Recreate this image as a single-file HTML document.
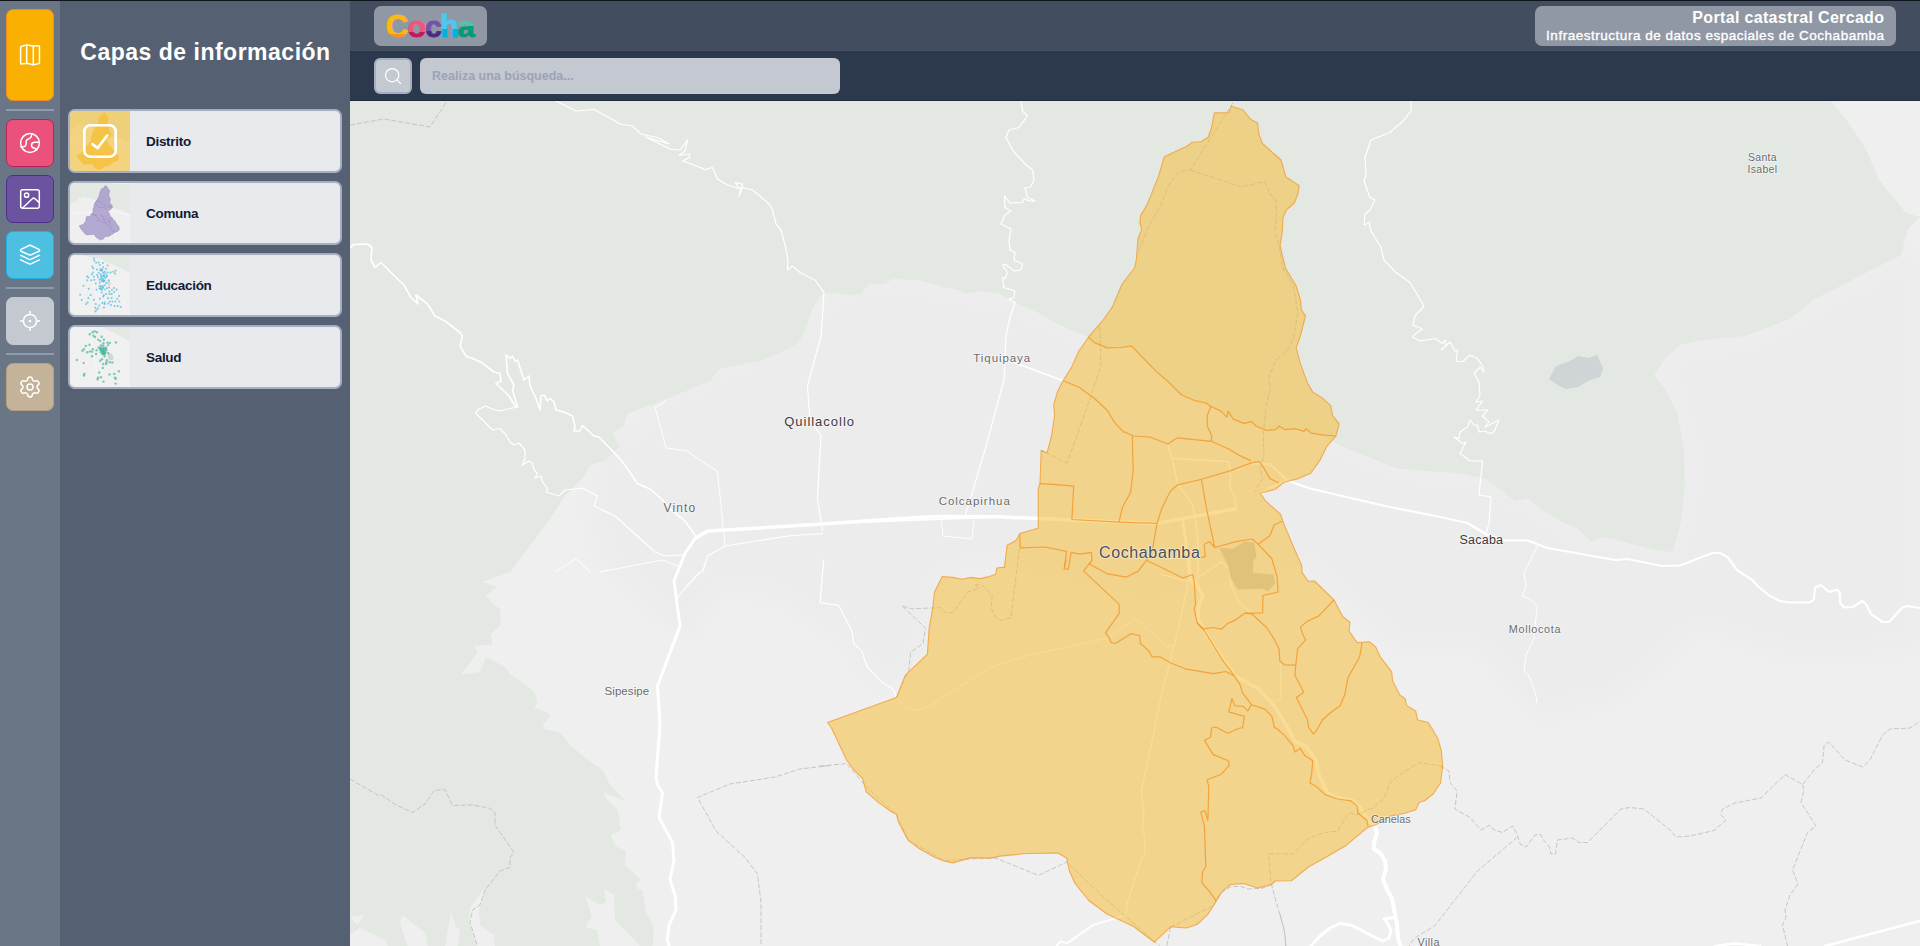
<!DOCTYPE html>
<html lang="es">
<head>
<meta charset="utf-8">
<title>Portal catastral Cercado</title>
<style>
*{box-sizing:border-box;margin:0;padding:0}
html,body{width:1920px;height:946px;overflow:hidden;background:#eeeeee;font-family:"Liberation Sans",sans-serif}
#app{position:relative;width:1920px;height:946px;overflow:hidden}
#topline{position:absolute;left:0;top:0;width:1920px;height:1px;background:#10151d;z-index:20}
/* left icon bar */
#bar{position:absolute;left:0;top:0;width:60px;height:946px;background:#6a7586}
.btn{position:absolute;left:6px;width:48px;height:48px;border-radius:7px;border:1px solid transparent;display:flex;align-items:center;justify-content:center}
.btn svg{display:block}
.sep{position:absolute;left:6px;width:48px;height:2px;background:#8e99aa}
#b1{top:9px;height:92px;background:#f9b000;border-color:#f08a1c}
#b2{top:119px;background:#ea527b;border-color:#bd1f56}
#b3{top:175px;background:#6b539f;border-color:#4c2f8a}
#b4{top:231px;background:#4dc0e1;border-color:#22aee0}
#b5{top:297px;background:#c4c8d0;border-color:#c4c8d0}
#b6{top:363px;background:#c4b299;border-color:#b59f80}
/* panel */
#panel{position:absolute;left:60px;top:0;width:290px;height:946px;background:#556172}
#panel h1{position:absolute;left:0;top:37px;width:290px;text-align:center;color:#fff;font-size:23px;line-height:30px;font-weight:bold;white-space:nowrap;letter-spacing:0.5px;padding-left:1px}
.card{position:absolute;left:8px;width:274px;height:64px;border:2px solid #a5afc0;border-radius:7px;background:#e8eaee;overflow:hidden}
.card .th{position:absolute;left:0;top:0;width:60px;height:60px;overflow:hidden}
.card .lb{position:absolute;left:76px;top:1px;line-height:60px;font-size:13.5px;letter-spacing:-0.3px;font-weight:bold;color:#111a33;white-space:nowrap}
/* top bars */
#top{position:absolute;left:350px;top:1px;width:1570px;height:50px;background:#424d5f;border-bottom:1px solid #465164}
#search{position:absolute;left:350px;top:51px;width:1570px;height:50px;background:#2c384b;border-bottom:1px solid #202c40}
#logo{position:absolute;left:24px;top:5px;width:113px;height:40px;border-radius:7px;background:#9198a5}
#ttl{position:absolute;left:1185px;top:5px;width:361px;height:40px;border-radius:7px;background:#9198a5;color:#fff;text-align:right;padding-right:12px;white-space:nowrap}
#ttl b{display:block;font-size:16px;line-height:18px;margin-top:3px;letter-spacing:0.33px;margin-right:-0.33px}
#ttl span{display:block;font-size:13.5px;line-height:18px;margin-top:0;letter-spacing:0.52px;margin-right:-0.52px;-webkit-text-stroke:0.35px #fff}
#sbtn{position:absolute;left:24px;top:7px;width:38px;height:36px;border-radius:6px;background:#c4c8d0;border:2px solid #a5afc0}
#sinp{position:absolute;left:70px;top:7px;width:420px;height:36px;border-radius:6px;background:#c4c8d0;color:#9ba3b4;font-size:12.5px;line-height:36px;padding-left:12px;font-weight:bold}
/* map */
#map{position:absolute;left:350px;top:101px;width:1570px;height:845px;background:#efefef;overflow:hidden}
#map svg{position:absolute;left:-350px;top:-101px}
</style>
</head>
<body>
<div id="app">
<div id="map">
<svg id="mapsvg" width="1920" height="946" viewBox="0 0 1920 946">
<rect x="350" y="100" width="1570" height="846" fill="#efefef"/>
<defs><filter id="ub" x="-10%" y="-10%" width="120%" height="120%"><feGaussianBlur stdDeviation="9"/></filter></defs>
<path d="M600.0 450.0 L662.0 395.0 L720.0 365.0 L802.0 330.0 L830.0 288.0 L892.0 275.0 L1015.0 298.0 L1088.0 333.0 L1340.0 440.0 L1397.0 464.0 L1485.0 474.0 L1540.0 504.0 L1591.0 538.0 L1674.0 547.0 L1685.0 486.0 L1684.0 448.0 L1665.0 388.0 L1654.0 376.0 L1680.0 345.0 L1745.0 336.0 L1813.0 300.0 L1901.0 255.0 L1920.0 250.0 L1920.0 650.0 L1800.0 660.0 L1700.0 630.0 L1620.0 700.0 L1540.0 720.0 L1480.0 650.0 L1400.0 650.0 L1340.0 600.0 L1301.0 565.0 L1150.0 600.0 L1004.0 567.0 L942.0 577.0 L930.0 627.0 L927.0 654.0 L905.0 675.0 L880.0 690.0 L840.0 640.0 L780.0 600.0 L720.0 590.0 L690.0 640.0 L640.0 600.0 L600.0 560.0 L585.0 500.0 Z" fill="#ececec" filter="url(#ub)"/>
<path d="M350.0 100.0 L1830.0 100.0 L1848.0 122.0 L1866.0 149.0 L1879.0 180.0 L1906.0 213.0 L1920.0 217.0 L1908.0 229.0 L1901.0 255.0 L1813.0 300.0 L1790.0 319.0 L1745.0 336.0 L1697.5 341.0 L1680.0 345.0 L1665.0 358.5 L1654.0 376.0 L1665.0 388.5 L1677.5 413.5 L1684.0 448.5 L1685.0 486.0 L1681.0 522.5 L1672.5 552.0 L1655.0 550.0 L1620.0 541.0 L1602.5 537.0 L1591.0 541.5 L1577.5 528.5 L1560.0 521.0 L1540.0 508.5 L1527.5 498.5 L1515.0 501.0 L1502.5 491.0 L1485.0 478.5 L1460.0 473.5 L1397.5 468.5 L1372.5 458.5 L1350.0 450.0 L1337.0 444.0 L1322.0 435.0 L1296.0 429.0 L1267.0 430.0 L1244.0 423.0 L1227.0 415.0 L1211.0 406.0 L1194.0 400.0 L1182.0 395.0 L1171.0 384.0 L1155.0 370.0 L1131.0 346.0 L1107.0 348.0 L1088.0 337.0 L1080.0 334.0 L1070.0 330.0 L1055.0 322.5 L1037.5 312.5 L1015.0 302.5 L1000.0 294.0 L980.0 291.0 L965.0 294.0 L957.5 290.0 L940.0 286.0 L917.5 280.0 L892.5 279.0 L885.0 284.0 L870.0 284.0 L860.0 294.0 L847.5 295.0 L830.0 292.5 L821.0 295.0 L812.0 310.0 L802.5 336.0 L795.0 346.0 L760.0 361.0 L720.0 368.5 L710.0 381.0 L662.5 401.0 L627.5 413.5 L624.0 426.0 L612.5 433.5 L620.0 446.0 L605.0 461.0 L590.0 465.0 L582.5 478.5 L565.0 496.0 L545.0 526.0 L510.0 572.0 L482.5 582.0 L497.5 587.0 L485.0 596.0 L500.0 609.5 L501.0 624.5 L491.0 634.5 L492.5 644.5 L474.0 646.0 L477.5 653.0 L461.0 674.5 L480.0 672.0 L486.0 657.0 L505.0 667.0 L510.0 674.5 L522.5 682.0 L535.0 693.0 L537.5 702.0 L534.0 708.0 L545.0 711.0 L551.0 716.0 L542.5 724.5 L545.0 729.5 L560.0 732.0 L570.0 745.0 L585.0 757.5 L602.5 770.0 L610.0 785.0 L626.0 801.0 L604.0 792.5 L605.0 797.5 L617.5 810.0 L621.0 830.0 L611.0 835.0 L615.0 846.0 L626.0 851.0 L625.0 865.0 L641.0 880.0 L636.0 882.5 L637.5 889.0 L642.5 890.0 L645.0 910.0 L654.0 927.5 L652.5 946.0 L350.0 946.0 Z" fill="#e3e8e3"/>
<path d="M1549.0 379.0 L1556.0 366.0 L1570.0 361.0 L1578.0 356.0 L1588.0 358.0 L1597.0 355.0 L1603.0 368.0 L1600.0 377.0 L1588.0 381.0 L1578.0 387.0 L1566.0 389.0 L1558.0 385.0 Z" fill="#cfd4d6"/>
<path d="M604.0 888.0 L614.0 895.0 L615.0 920.0 L640.0 946.0 L600.0 946.0 L597.0 930.0 L585.0 927.0 L592.0 917.0 L585.0 896.0 L600.0 905.0 L606.0 902.0 Z" fill="#efefef"/>
<path d="M485.0 887.5 L482.5 897.5 L479.0 910.0 L480.0 925.0 L494.0 935.0 L495.0 946.0 L477.5 946.0 L469.0 922.5 L470.0 907.5 Z" fill="#efefef"/>
<path d="M451.0 912.5 L456.0 927.5 L460.0 930.0 L458.0 946.0 L427.5 946.0 L425.0 932.5 L402.5 915.0 L400.0 922.5 L404.0 935.0 L407.5 946.0 L445.0 946.0 Z" fill="#efefef"/>
<path d="M365.0 915.0 L357.5 925.0 L350.0 917.5 L350.0 935.0 L360.0 927.5 L385.0 940.0 L387.5 946.0 L350.0 946.0 L350.0 917.0 Z" fill="#efefef"/>
<path d="M695.0 538.5 L707.5 531.0 L760.0 528.0 L830.0 523.5 L900.0 518.5 L940.0 516.5 L1000.0 516.8 L1038.0 518.6 L1157.0 523.4 L1236.0 508.8" fill="none" stroke="#ffffff" stroke-width="3.5" stroke-linejoin="round" stroke-linecap="round"/>
<path d="M1000.0 517.0 L830.0 523.5 L707.5 531.0" fill="none" stroke="#ffffff" stroke-width="1.5" stroke-linejoin="round" stroke-linecap="round"/>
<path d="M707.5 531.0 L695.0 538.5 L685.0 553.5 L677.5 572.0 L674.0 581.0 L680.0 626.0 L657.5 686.0 L660.0 724.5 L656.0 777.5 L657.5 785.0 L662.5 792.5 L659.0 817.5 L672.5 842.5 L674.0 860.0 L670.0 880.0 L675.0 895.0 L676.0 910.0 L669.0 925.0 L667.5 940.0 L669.0 946.0" fill="none" stroke="#ffffff" stroke-width="3.0" stroke-linejoin="round" stroke-linecap="round"/>
<path d="M822.5 533.5 L787.5 536.0 L725.0 546.0 L707.5 556.0 L702.5 572.0 L700.0 572.0 L685.0 588.0 L677.5 598.0" fill="none" stroke="#ffffff" stroke-width="1.2" stroke-linejoin="round" stroke-linecap="round"/>
<path d="M555.0 572.0 L576.0 558.5 L590.0 572.0" fill="none" stroke="#ffffff" stroke-width="1.0" stroke-linejoin="round" stroke-linecap="round"/>
<path d="M600.0 572.0 L662.5 560.0 L677.5 566.0" fill="none" stroke="#ffffff" stroke-width="1.0" stroke-linejoin="round" stroke-linecap="round"/>
<path d="M556.0 101.0 L576.0 111.0 L594.0 109.5 L609.0 117.5 L620.0 124.0 L632.5 126.0 L641.0 134.0 L657.5 137.5 L669.0 144.0 L646.0 137.0 L670.0 149.0 L680.0 150.0 L687.5 140.0 L685.0 151.0 L679.0 155.5 L689.0 154.0 L690.0 157.5 L682.5 161.0 L695.0 165.5 L705.0 169.5 L712.5 167.5 L717.5 179.0 L727.5 185.0 L740.0 189.0 L735.0 182.5 L742.5 184.0 L739.0 196.0 L742.5 187.5 L752.5 190.0 L760.0 196.0 L770.0 205.0 L772.5 210.0 L776.0 224.0 L781.0 230.0 L785.0 245.0 L788.0 260.0 L787.5 270.0 L792.5 266.0 L800.0 272.5 L815.0 280.0 L824.0 292.5 L821.0 336.0 L807.5 386.0 L810.0 421.0 L821.0 435.0 L817.5 498.5 L822.5 531.0" fill="none" stroke="#ffffff" stroke-width="1.2" stroke-linejoin="round" stroke-linecap="round"/>
<path d="M350.0 247.5 L354.0 244.5 L367.5 244.0 L372.0 247.5 L371.0 260.0 L375.0 267.5 L381.0 262.5 L396.0 277.5 L404.0 285.0 L411.0 297.5 L418.0 304.0 L416.0 295.0 L427.5 304.0 L435.0 316.0 L445.0 321.0 L460.0 332.5 L462.5 336.0 L460.0 346.0 L466.0 356.0 L481.0 362.0 L494.0 372.0 L500.0 373.5 L501.0 381.0 L496.0 383.5 L509.0 396.0 L515.0 406.0 L517.5 407.0 L512.5 390.0 L514.0 385.0 L507.5 373.5 L506.0 355.0 L510.0 358.5 L512.5 356.0 L515.0 361.0 L517.5 360.0 L524.0 380.0 L529.0 376.0 L530.0 386.0 L536.0 398.5 L540.0 410.0 L541.0 396.0 L544.0 395.0 L547.5 401.0 L550.0 398.5 L554.0 402.0 L556.0 410.0 L564.0 412.0 L572.5 416.0 L575.0 426.0 L574.0 431.0 L580.0 431.0 L582.5 425.5 L594.0 436.0 L599.0 437.0 L615.0 453.5 L625.0 465.0 L637.5 483.5 L650.0 489.0 L662.5 500.0 L672.5 511.0 L685.0 521.0 L695.0 535.0" fill="none" stroke="#ffffff" stroke-width="1.6" stroke-linejoin="round" stroke-linecap="round"/>
<path d="M517.5 407.0 L510.0 408.5 L500.0 411.0 L495.0 410.0 L485.0 406.0 L477.5 410.0 L476.0 413.5 L486.0 423.5 L492.5 430.0 L500.0 428.5 L506.0 435.0 L510.0 442.0 L514.0 445.0 L519.0 443.0 L525.0 450.0 L525.0 458.5 L522.5 465.0 L529.0 461.0 L532.5 463.5 L534.0 470.0 L537.5 473.5 L535.0 478.0 L541.0 476.0 L542.5 482.0 L547.5 488.5 L546.0 492.0 L559.0 496.0 L565.0 490.0 L582.5 488.0 L597.5 496.0 L594.0 506.0 L615.0 516.0 L655.0 552.0 L665.0 556.0 L682.5 555.0" fill="none" stroke="#ffffff" stroke-width="1.2" stroke-linejoin="round" stroke-linecap="round"/>
<path d="M665.0 400.0 L662.0 404.0 L655.0 407.0 L666.0 448.0 L687.5 451.0 L700.0 460.0 L717.5 471.0 L725.0 546.0" fill="none" stroke="#ffffff" stroke-width="1.0" stroke-linejoin="round" stroke-linecap="round"/>
<path d="M1021.0 101.0 L1022.5 111.0 L1027.5 116.0 L1019.0 127.5 L1009.0 130.0 L1006.0 137.5 L1012.5 150.0 L1025.0 164.0 L1032.5 170.0 L1034.0 180.0 L1030.0 187.5 L1025.0 187.5 L1027.5 197.5 L1035.0 201.0 L1030.0 201.0 L1024.0 199.0 L1022.5 202.5 L1010.0 203.0 L1004.5 196.0 L1005.0 207.5 L1011.0 211.0 L1005.0 215.0 L1001.0 224.0 L1011.0 229.0 L1009.0 240.0 L1010.0 250.0 L1015.0 252.5 L1014.0 260.0 L1022.5 264.0 L1021.0 270.0 L1014.0 271.0 L1005.0 264.0 L1002.5 265.0 L1007.5 272.5 L1005.0 279.0 L1002.5 277.5 L1004.0 287.5 L1015.0 291.0 L1014.0 297.5 L1009.0 299.0 L1015.0 302.5 L1010.0 317.5 L1006.0 336.0 L1004.0 380.0 L985.0 450.0 L970.0 500.0 L965.0 516.0" fill="none" stroke="#ffffff" stroke-width="1.2" stroke-linejoin="round" stroke-linecap="round"/>
<path d="M1000.0 358.0 L1013.0 362.0 L1064.0 381.0" fill="none" stroke="#ffffff" stroke-width="1.5" stroke-linejoin="round" stroke-linecap="round"/>
<path d="M941.0 516.0 L943.0 536.0 L972.0 539.0 L974.0 520.0" fill="none" stroke="#ffffff" stroke-width="1.0" stroke-linejoin="round" stroke-linecap="round"/>
<path d="M1411.0 101.0 L1411.0 111.0 L1404.0 120.0 L1390.0 132.5 L1371.0 140.0 L1365.0 157.5 L1366.0 175.0 L1364.0 181.0 L1370.0 197.5 L1375.0 200.0 L1370.0 210.0 L1365.0 214.0 L1364.0 225.0 L1369.0 222.5 L1371.0 231.0 L1381.0 247.5 L1384.0 260.0 L1396.0 272.5 L1410.0 282.5 L1417.5 295.0 L1424.0 306.0 L1415.0 316.0 L1413.0 325.0 L1422.5 329.0 L1414.0 335.0 L1412.5 337.0 L1420.0 341.0 L1435.0 338.5 L1442.5 343.5 L1445.0 340.0 L1446.0 346.0 L1441.0 350.0 L1450.0 342.0 L1455.0 351.0 L1457.5 350.0 L1456.0 361.0 L1462.5 362.0 L1470.0 355.0 L1477.5 358.5 L1482.5 366.0 L1484.0 372.0 L1480.0 367.0 L1474.0 373.5 L1479.0 382.0 L1480.0 396.0 L1476.0 402.0 L1482.5 401.0 L1476.0 410.0 L1487.5 410.0 L1482.5 416.0 L1489.0 422.0 L1485.0 427.0 L1499.0 420.0 L1494.0 432.0 L1490.0 433.5 L1485.0 431.0 L1479.0 432.0 L1477.5 425.0 L1474.0 425.0 L1470.0 420.0 L1467.5 427.0 L1460.0 432.0 L1459.0 438.5 L1454.0 437.0 L1462.5 443.5 L1466.0 442.0 L1460.0 453.5 L1465.0 457.0 L1470.0 461.0 L1482.5 461.0 L1481.0 476.0 L1479.0 495.0 L1491.0 497.0 L1489.0 523.5 L1486.0 533.5" fill="none" stroke="#ffffff" stroke-width="1.2" stroke-linejoin="round" stroke-linecap="round"/>
<path d="M1236.0 508.8 L1234.4 496.4 L1230.0 487.5 L1230.8 476.8 L1229.0 461.7 L1172.2 458.2" fill="none" stroke="#ffffff" stroke-width="1.5" stroke-linejoin="round" stroke-linecap="round"/>
<path d="M1167.8 444.9 L1172.2 458.2 L1177.6 484.0 L1191.8 503.5 L1195.3 517.7 L1198.0 542.5 L1198.0 578.0" fill="none" stroke="#ffffff" stroke-width="1.5" stroke-linejoin="round" stroke-linecap="round"/>
<path d="M1182.9 521.2 L1186.4 546.1 L1190.9 578.0 L1192.6 583.4" fill="none" stroke="#ffffff" stroke-width="3.0" stroke-linejoin="round" stroke-linecap="round"/>
<path d="M1236.0 470.0 L1252.0 462.6 L1269.9 464.4 L1287.6 480.4 L1301.8 485.7 L1310.0 488.5 L1385.0 506.0 L1440.0 517.0 L1467.5 523.0 L1487.5 535.0 L1505.0 540.5 L1527.5 540.5 L1547.5 548.0 L1615.0 560.0 L1627.5 559.0 L1662.5 566.0 L1680.0 565.5 L1712.5 553.0 L1720.0 553.0 L1727.5 557.0 L1737.5 570.5 L1752.5 580.0 L1757.5 586.0 L1770.0 596.0 L1780.0 601.0 L1790.0 602.5 L1810.0 602.5 L1814.0 599.0 L1815.0 587.5 L1821.0 585.0 L1829.0 592.0 L1837.5 589.5 L1840.0 594.0 L1840.0 602.5 L1844.0 607.5 L1852.5 607.0 L1862.5 601.0 L1866.0 604.0 L1871.0 614.0 L1882.5 622.0 L1889.0 622.0 L1902.5 607.5 L1907.5 606.0 L1920.0 608.0" fill="none" stroke="#ffffff" stroke-width="2.2" stroke-linejoin="round" stroke-linecap="round"/>
<path d="M1287.6 480.4 L1270.0 488.0 L1262.0 493.0" fill="none" stroke="#ffffff" stroke-width="2.2" stroke-linejoin="round" stroke-linecap="round"/>
<path d="M1537.5 546.0 L1524.0 572.5 L1526.0 586.0 L1522.5 596.0 L1530.0 599.0 L1537.5 606.0 L1536.0 617.5 L1534.0 639.0 L1526.0 655.0 L1524.0 671.0 L1529.0 676.0 L1536.0 696.0 L1537.0 703.0" fill="none" stroke="#ffffff" stroke-width="1.0" stroke-linejoin="round" stroke-linecap="round"/>
<path d="M1188.4 560.0 L1190.2 579.5 L1196.4 583.0 L1202.6 595.5 L1198.2 607.9 L1198.2 620.4 L1206.2 634.6 L1234.6 675.4 L1259.4 689.6 L1275.4 707.4 L1287.8 728.0 L1294.9 741.3 L1305.6 745.8 L1316.3 760.0 L1318.0 772.4 L1326.9 791.9 L1335.8 797.2 L1351.8 799.9 L1360.6 807.9 L1369.5 822.1 L1374.9 825.7" fill="none" stroke="#ffffff" stroke-width="3.5" stroke-linejoin="round" stroke-linecap="round"/>
<path d="M1374.9 825.7 L1377.0 833.0 L1374.0 843.0 L1374.0 849.0 L1380.0 853.0 L1385.0 860.5 L1386.0 868.0 L1383.0 879.0 L1387.5 890.5 L1392.0 898.0 L1394.0 909.0 L1397.0 924.0 L1398.0 938.0 L1400.5 946.0" fill="none" stroke="#ffffff" stroke-width="4.0" stroke-linejoin="round" stroke-linecap="round"/>
<path d="M1394.0 917.5 L1384.0 919.0 L1387.5 923.0 L1391.0 930.5 L1389.0 938.0 L1382.5 941.0 L1374.0 937.0 L1352.5 925.5 L1340.0 923.5 L1330.0 928.0 L1319.0 937.0 L1311.0 946.0" fill="none" stroke="#ffffff" stroke-width="3.0" stroke-linejoin="round" stroke-linecap="round"/>
<path d="M1920.0 921.0 L1825.0 946.0" fill="none" stroke="#ffffff" stroke-width="2.5" stroke-linejoin="round" stroke-linecap="round"/>
<path d="M1715.0 946.0 L1735.0 943.5 L1760.0 946.0" fill="none" stroke="#ffffff" stroke-width="2.5" stroke-linejoin="round" stroke-linecap="round"/>
<path d="M1160.0 574.2 L1186.6 581.3 L1197.3 578.6 L1221.3 561.8 L1229.2 568.9 L1231.0 584.9 L1238.1 600.8 L1252.3 614.2" fill="none" stroke="#ffffff" stroke-width="1.3" stroke-linejoin="round" stroke-linecap="round"/>
<path d="M1188.4 583.0 L1177.8 631.0 L1160.0 700.3 L1154.7 728.0 L1141.4 791.9 L1144.0 815.0 L1142.3 829.2 L1144.9 836.3 L1144.9 852.3 L1139.6 864.7 L1127.0 904.0 L1127.0 909.4 L1124.3 915.6" fill="none" stroke="#ffffff" stroke-width="1.2" stroke-linejoin="round" stroke-linecap="round"/>
<path d="M1124.3 915.6 L1106.5 920.9 L1092.3 925.4 L1079.9 934.3 L1067.5 943.1 L1060.4 941.4 L1056.8 946.0" fill="none" stroke="#ffffff" stroke-width="2.0" stroke-linejoin="round" stroke-linecap="round"/>
<path d="M896.4 697.6 L905.2 706.5 L916.8 710.9 L930.1 705.6 L990.5 667.4 L1029.5 655.0 L1107.6 638.1 L1135.2 618.6 L1160.0 639.9 L1166.2 646.1 L1174.2 645.8" fill="none" stroke="#ffffff" stroke-width="1.0" stroke-linejoin="round" stroke-linecap="round"/>
<path d="M1280.7 663.0 L1280.7 698.5 L1271.9 701.2" fill="none" stroke="#ffffff" stroke-width="1.0" stroke-linejoin="round" stroke-linecap="round"/>
<path d="M823.6 560.0 L820.0 602.6 L838.6 605.3 L852.0 631.0 L853.7 643.5 L861.7 650.6 L867.0 666.5 L882.1 682.5 L892.8 688.7 L896.4 696.7" fill="none" stroke="#ffffff" stroke-width="1.2" stroke-linejoin="round" stroke-linecap="round"/>
<path d="M1233.0 102.7 L1190.4 170.1 L1178.9 171.9 L1167.4 187.0 L1162.0 203.0 L1147.8 227.8 L1138.0 252.7" fill="none" stroke="#bfc1c2" stroke-width="0.9" stroke-dasharray="5 2" stroke-linejoin="round"/>
<path d="M1190.4 170.1 L1242.0 187.0 L1265.0 181.3 L1268.6 191.4 L1275.7 201.2 L1276.6 215.4 L1274.8 233.2 L1279.2 245.6 L1282.8 268.0 L1293.4 285.8 L1297.9 312.4 L1293.4 339.0 L1286.3 351.5 L1275.7 360.3 L1268.6 378.1 L1270.4 388.7 L1265.9 406.5 L1263.3 436.0 L1264.0 455.0 L1260.0 470.0 L1262.8 478.0 L1255.0 492.0" fill="none" stroke="#bfc1c2" stroke-width="0.9" stroke-dasharray="5 2" stroke-linejoin="round"/>
<path d="M1099.9 326.6 L1100.8 365.7 L1091.0 395.8 L1076.8 436.0 L1067.0 463.0 L1041.2 450.2" fill="none" stroke="#bfc1c2" stroke-width="0.9" stroke-dasharray="5 2" stroke-linejoin="round"/>
<path d="M902.6 606.2 L912.3 608.8 L940.7 607.6 L946.1 613.3 L953.2 612.4 L967.4 592.0 L979.8 588.4 L974.5 584.9 L979.8 584.0 L986.0 588.4 L992.2 595.5 L991.3 607.9 L994.9 616.8 L1001.1 620.4 L1010.9 617.7 L1018.0 560.0 L1020.0 545.0" fill="none" stroke="#bfc1c2" stroke-width="0.9" stroke-dasharray="5 2" stroke-linejoin="round"/>
<path d="M902.6 606.2 L925.6 628.4 L923.0 643.5 L910.6 652.3 L908.8 670.1 L896.4 697.6" fill="none" stroke="#bfc1c2" stroke-width="0.9" stroke-dasharray="5 2" stroke-linejoin="round"/>
<path d="M1442.7 766.2 L1419.2 762.6 L1405.0 771.5 L1390.8 781.3 L1383.7 799.0 L1373.1 807.9 L1360.6 813.2 L1355.3 815.0 L1349.1 812.3 L1337.6 831.0 L1323.4 832.8 L1307.4 839.0 L1293.2 854.1 L1268.7 853.7 L1271.0 882.5 L1274.5 896.0 L1284.1 928.9 L1285.9 946.0" fill="none" stroke="#bfc1c2" stroke-width="0.9" stroke-dasharray="5 2" stroke-linejoin="round"/>
<path d="M1440.0 766.0 L1449.0 771.0 L1450.0 782.5 L1457.0 791.0 L1455.0 809.0 L1470.0 817.5 L1481.0 830.0 L1490.0 825.0 L1494.0 830.0 L1502.5 832.5 L1512.5 826.0 L1517.5 835.0 L1520.0 844.0 L1526.0 847.0 L1535.0 835.0 L1541.0 834.5 L1542.5 839.0 L1549.0 846.0 L1551.0 854.0 L1555.5 854.0 L1557.5 840.0 L1572.5 838.0 L1579.0 842.5 L1587.5 842.5 L1621.0 809.0 L1630.0 807.5 L1644.0 809.0 L1670.0 830.0 L1676.0 837.0 L1690.0 836.0 L1714.0 830.5 L1726.0 820.0 L1721.0 815.0 L1722.5 809.0 L1735.0 803.0 L1761.0 798.0 L1785.0 774.5 L1802.5 784.5 L1815.0 769.0 L1822.5 762.5 L1824.0 746.0 L1829.0 742.0 L1845.0 760.0 L1862.5 767.0 L1870.0 760.0 L1882.5 735.0 L1890.0 729.0 L1910.0 728.0 L1920.0 721.0" fill="none" stroke="#bfc1c2" stroke-width="0.9" stroke-dasharray="5 2" stroke-linejoin="round"/>
<path d="M1802.5 784.5 L1804.0 790.0 L1801.0 802.5 L1816.0 826.0 L1807.5 832.5 L1792.5 870.0 L1798.0 884.0 L1790.0 895.0 L1785.0 910.0 L1786.0 917.5 L1782.5 925.0 L1787.5 946.0" fill="none" stroke="#bfc1c2" stroke-width="0.9" stroke-dasharray="5 2" stroke-linejoin="round"/>
<path d="M1517.5 837.0 L1477.5 871.0 L1440.0 919.0 L1435.0 925.5 L1414.0 938.5 L1409.0 946.0" fill="none" stroke="#bfc1c2" stroke-width="0.9" stroke-dasharray="5 2" stroke-linejoin="round"/>
<path d="M820.0 766.2 L846.6 763.5 L864.4 784.8 L896.4 815.0 L908.8 840.7 L944.3 860.8 L969.1 859.0 L995.8 858.1 L1038.4 875.4 L1066.8 862.1 L1102.3 896.0 L1156.3 943.1 L1160.0 946.0" fill="none" stroke="#bfc1c2" stroke-width="0.9" stroke-dasharray="5 2" stroke-linejoin="round"/>
<path d="M350.0 779.0 L377.5 795.0 L381.0 794.5 L395.0 804.5 L412.5 812.5 L425.0 804.0 L434.0 790.5 L445.0 789.5 L452.5 805.5 L472.5 805.0 L489.0 808.0 L495.0 812.5 L495.0 825.0 L514.0 852.5 L510.0 857.5 L510.0 867.5 L500.0 871.0 L485.0 890.0 L480.0 905.0 L472.5 910.0 L470.0 922.5 L477.5 946.0" fill="none" stroke="#bfc1c2" stroke-width="0.9" stroke-dasharray="5 2" stroke-linejoin="round"/>
<path d="M1170.5 927.1 L1213.1 905.8 L1220.2 893.4 L1230.8 886.7 L1239.7 886.3 L1248.6 889.0 L1262.8 888.1 L1271.7 884.5" fill="none" stroke="#bfc1c2" stroke-width="0.9" stroke-dasharray="5 2" stroke-linejoin="round"/>
<path d="M1170.5 927.1 L1166.9 946.0" fill="none" stroke="#bfc1c2" stroke-width="0.9" stroke-dasharray="5 2" stroke-linejoin="round"/>
<path d="M830.0 765.5 L800.0 769.0 L775.0 777.0 L730.0 784.0 L697.5 797.5 L716.0 831.0 L745.0 857.5 L757.5 874.0 L761.0 902.5 L761.0 946.0" fill="none" stroke="#bfc1c2" stroke-width="0.9" stroke-dasharray="5 2" stroke-linejoin="round"/>
<path d="M820.0 766.2 L830.0 765.5" fill="none" stroke="#bfc1c2" stroke-width="0.9" stroke-dasharray="5 2" stroke-linejoin="round"/>
<path d="M350.0 125.0 L384.0 119.0 L430.0 127.0 L446.0 102.5" fill="none" stroke="#bfc1c2" stroke-width="0.9" stroke-dasharray="5 2" stroke-linejoin="round"/>
<path d="M1280.0 914.0 L1285.0 934.0 L1285.6 946.0" fill="none" stroke="#bfc1c2" stroke-width="0.9" stroke-dasharray="5 2" stroke-linejoin="round"/>
<path d="M1219.3 547.9 L1232.6 548.7 L1245.0 541.6 L1253.9 542.5 L1256.6 556.7 L1253.0 562.1 L1253.0 572.7 L1273.4 574.5 L1275.2 583.4 L1268.1 591.4 L1262.8 588.7 L1237.9 589.6 L1230.8 578.0 L1227.3 563.8 Z" fill="#cbcbc9"/>
<path d="M1231.3 106.2 L1242.8 109.8 L1250.8 119.5 L1257.6 123.1 L1258.8 133.7 L1262.4 143.5 L1281.0 160.0 L1285.8 176.7 L1299.1 185.6 L1297.9 194.1 L1294.3 203.0 L1286.3 210.1 L1282.8 218.1 L1282.4 231.4 L1280.1 245.6 L1285.4 268.0 L1296.1 285.8 L1300.5 300.0 L1301.4 309.7 L1305.5 315.9 L1300.5 335.5 L1296.1 347.9 L1300.5 363.9 L1307.6 383.4 L1313.0 392.3 L1321.8 397.6 L1330.7 405.6 L1332.5 415.4 L1339.2 423.9 L1336.0 436.0 L1326.7 446.7 L1319.6 460.9 L1310.7 473.3 L1298.3 478.6 L1284.1 482.2 L1275.2 489.3 L1260.1 493.2 L1266.3 501.7 L1280.5 514.1 L1284.1 524.8 L1294.7 549.6 L1301.8 565.6 L1302.0 572.4 L1308.3 581.3 L1314.5 581.0 L1334.0 600.0 L1342.9 616.8 L1350.0 622.1 L1349.1 631.0 L1357.1 642.6 L1369.5 641.7 L1375.7 647.0 L1380.2 656.8 L1391.7 671.9 L1392.6 680.7 L1399.7 694.9 L1405.0 698.5 L1406.8 705.6 L1415.7 710.9 L1417.5 719.8 L1428.1 722.5 L1431.7 728.0 L1437.9 738.7 L1441.4 751.1 L1442.7 766.2 L1440.5 783.0 L1433.4 793.7 L1424.6 800.8 L1419.2 802.6 L1415.7 809.7 L1405.0 813.2 L1390.8 815.9 L1375.7 824.8 L1367.7 827.4 L1346.4 845.2 L1326.9 856.7 L1308.9 866.8 L1291.4 880.7 L1275.2 881.0 L1271.7 884.5 L1257.5 888.1 L1243.3 883.6 L1230.8 884.5 L1221.9 891.6 L1216.6 900.5 L1207.7 914.7 L1197.1 924.5 L1186.4 928.0 L1170.5 926.8 L1154.5 942.2 L1133.2 926.3 L1106.5 913.8 L1088.8 900.5 L1074.6 882.8 L1069.2 870.3 L1066.6 857.9 L1057.7 853.1 L1026.6 853.5 L1000.0 856.1 L990.5 858.1 L970.9 857.6 L953.2 862.9 L944.3 861.2 L933.6 856.7 L919.4 848.7 L907.9 839.9 L898.1 821.2 L896.7 814.5 L891.0 811.5 L878.6 802.6 L866.2 791.9 L862.6 778.6 L853.7 769.7 L846.6 760.0 L831.5 728.0 L827.5 722.5 L896.4 697.6 L905.2 675.4 L927.4 654.1 L929.2 627.5 L932.8 607.9 L934.5 592.0 L942.2 576.5 L953.2 577.4 L962.0 579.2 L970.9 577.4 L979.8 578.6 L987.8 576.9 L995.8 574.2 L996.7 568.0 L1004.7 567.1 L1004.4 567.4 L1007.1 545.2 L1015.6 540.8 L1020.4 533.3 L1038.2 528.3 L1038.2 489.3 L1040.0 483.0 L1041.2 450.2 L1047.0 452.9 L1051.5 436.0 L1054.6 415.4 L1053.7 404.7 L1057.3 392.3 L1063.1 380.7 L1071.5 367.4 L1078.6 351.5 L1088.4 337.2 L1103.5 319.5 L1112.3 307.1 L1122.1 284.0 L1134.5 268.0 L1136.3 259.8 L1138.1 238.5 L1141.6 229.6 L1139.9 222.5 L1140.7 215.4 L1147.0 204.8 L1151.4 194.1 L1158.5 176.4 L1164.2 156.8 L1186.9 146.2 L1192.2 142.3 L1201.1 141.7 L1208.2 137.3 L1211.8 126.6 L1214.4 112.8 L1228.6 112.8 Z" fill="#f5b92b" fill-opacity="0.5" stroke="none"/>
<path d="M1088.4 337.2 L1094.6 342.6 L1107.0 347.9 L1121.2 347.5 L1131.5 345.8 L1154.9 370.1 L1170.9 384.3 L1181.6 395.0 L1194.0 400.3 L1206.4 403.0 L1210.9 406.5 L1220.6 410.9 L1226.9 417.1 L1228.1 411.0 L1233.0 418.9 L1243.7 423.4 L1251.7 421.6 L1256.1 426.0 L1266.8 430.5 L1275.7 429.6 L1279.2 426.0 L1284.6 429.6 L1295.2 428.7 L1304.1 431.4 L1305.9 428.7 L1311.2 433.1 L1321.8 434.9 L1336.0 436.0" fill="none" stroke="#f39a2c" stroke-opacity="0.85" stroke-width="1.2" stroke-linejoin="round"/>
<path d="M1063.1 380.7 L1078.6 387.0 L1094.6 398.5 L1107.0 410.0 L1115.9 424.2 L1123.0 431.4 L1133.6 436.0 L1150.0 437.0 L1167.8 444.0 L1177.6 437.8 L1211.3 441.3 L1229.0 449.3 L1237.9 454.6 L1251.2 460.9" fill="none" stroke="#f39a2c" stroke-opacity="0.85" stroke-width="1.2" stroke-linejoin="round"/>
<path d="M1210.9 406.5 L1207.3 415.4 L1207.3 426.0 L1211.8 436.0 L1211.3 441.3" fill="none" stroke="#f39a2c" stroke-opacity="0.85" stroke-width="1.2" stroke-linejoin="round"/>
<path d="M1040.0 483.6 L1053.3 484.3 L1073.7 486.1 L1071.9 519.5 L1119.0 522.1 L1157.1 523.4" fill="none" stroke="#f39a2c" stroke-opacity="0.85" stroke-width="1.2" stroke-linejoin="round"/>
<path d="M1132.3 436.0 L1133.2 471.5 L1130.5 492.8 L1122.5 507.0 L1119.0 522.1" fill="none" stroke="#f39a2c" stroke-opacity="0.85" stroke-width="1.2" stroke-linejoin="round"/>
<path d="M1157.1 523.4 L1161.6 508.8 L1170.5 491.0 L1177.6 484.8 L1200.6 479.5 L1230.8 470.6 L1252.1 462.6 L1259.2 461.7 L1262.8 466.2 L1269.9 478.6 L1278.8 483.0" fill="none" stroke="#f39a2c" stroke-opacity="0.85" stroke-width="1.2" stroke-linejoin="round"/>
<path d="M1157.1 523.4 L1153.6 542.5 L1152.7 549.6 L1146.5 560.3 L1138.5 570.9 L1126.1 577.2 L1106.5 573.6 L1092.3 565.6 L1088.8 563.0" fill="none" stroke="#f39a2c" stroke-opacity="0.85" stroke-width="1.2" stroke-linejoin="round"/>
<path d="M1201.5 479.5 L1206.9 510.6 L1214.8 547.5 L1236.1 541.6 L1252.1 539.0 L1258.3 544.3 L1271.7 558.5 L1277.0 576.3 L1278.1 592.0 L1263.0 595.5 L1262.6 612.9 L1245.2 613.3" fill="none" stroke="#f39a2c" stroke-opacity="0.85" stroke-width="1.2" stroke-linejoin="round"/>
<path d="M1258.3 544.3 L1262.8 540.8 L1269.9 535.4 L1274.3 524.8 L1282.3 521.2" fill="none" stroke="#f39a2c" stroke-opacity="0.85" stroke-width="1.2" stroke-linejoin="round"/>
<path d="M1214.8 547.5 L1209.5 541.6 L1204.2 544.3 L1205.1 556.7 L1200.6 557.6" fill="none" stroke="#f39a2c" stroke-opacity="0.85" stroke-width="1.2" stroke-linejoin="round"/>
<path d="M1146.5 560.3 L1165.1 569.2 L1182.9 578.0 L1192.6 574.5 L1194.4 583.4 L1195.5 604.4 L1194.1 608.8 L1197.3 623.0 L1203.5 628.9 L1213.3 627.5 L1221.3 629.2 L1227.5 623.6 L1234.6 620.4 L1245.2 612.9 L1252.3 614.2 L1266.5 627.5 L1273.6 638.1 L1279.0 648.8 L1279.9 661.2 L1284.3 664.8 L1295.8 665.1" fill="none" stroke="#f39a2c" stroke-opacity="0.85" stroke-width="1.2" stroke-linejoin="round"/>
<path d="M1019.5 533.3 L1020.4 547.9 L1044.4 547.0 L1066.6 551.4 L1064.3 568.8 L1068.4 569.5 L1071.0 552.3 L1079.9 554.1 L1091.4 552.3 L1092.0 560.3 L1083.5 570.9 L1119.2 604.4 L1119.2 613.3 L1105.5 632.8 L1109.4 638.1 L1111.2 642.6 L1115.6 643.5 L1130.7 633.7 L1139.6 635.5 L1140.5 643.5 L1148.5 650.6 L1152.0 656.8 L1160.0 656.8 L1170.7 663.0 L1186.6 669.2 L1213.3 673.6 L1225.7 671.5 L1234.6 676.3" fill="none" stroke="#f39a2c" stroke-opacity="0.85" stroke-width="1.2" stroke-linejoin="round"/>
<path d="M1334.0 600.0 L1318.9 615.9 L1307.4 621.3 L1300.3 627.1 L1302.9 634.6 L1305.6 639.9 L1297.6 648.8 L1295.8 664.8 L1294.9 675.4 L1303.8 692.3 L1296.4 697.6 L1307.4 719.8 L1308.8 728.0 L1313.6 734.2" fill="none" stroke="#f39a2c" stroke-opacity="0.85" stroke-width="1.2" stroke-linejoin="round"/>
<path d="M1362.1 642.6 L1359.7 656.8 L1348.2 677.2 L1344.7 694.9 L1340.2 705.6 L1330.5 712.7 L1322.5 719.8 L1318.0 728.0 L1313.6 734.2" fill="none" stroke="#f39a2c" stroke-opacity="0.85" stroke-width="1.2" stroke-linejoin="round"/>
<path d="M1197.3 623.0 L1204.4 631.0 L1222.1 659.4 L1234.6 676.3 L1239.9 684.3 L1242.6 693.2 L1251.4 704.7 L1264.8 709.1 L1271.9 716.3 L1274.5 728.0 L1276.3 728.0 L1284.3 735.1 L1293.2 745.8 L1294.9 752.0 L1300.3 748.4 L1304.7 755.5 L1312.7 760.8 L1311.8 772.4 L1310.0 783.0 L1316.3 786.6 L1325.1 794.6 L1337.6 799.0 L1350.9 800.8 L1357.1 806.1 L1358.0 813.2 L1366.9 820.3 L1368.1 826.5" fill="none" stroke="#f39a2c" stroke-opacity="0.85" stroke-width="1.2" stroke-linejoin="round"/>
<path d="M1231.9 698.5 L1228.9 711.8 L1244.3 716.3 L1242.6 728.0 L1239.9 728.0 L1227.5 733.3 L1216.0 727.0 L1211.5 728.0 L1210.6 736.9 L1204.4 740.4 L1213.3 754.6 L1228.4 760.8 L1229.2 765.3 L1221.3 774.2 L1207.1 779.8 L1208.8 786.6 L1207.9 820.3 L1204.7 810.6 L1200.8 812.3 L1204.4 825.7 L1205.8 866.5 L1202.6 871.8 L1201.7 882.5 L1209.5 891.6 L1216.3 900.9" fill="none" stroke="#f39a2c" stroke-opacity="0.85" stroke-width="1.2" stroke-linejoin="round"/>
<path d="M1231.9 698.5 L1234.6 705.6 L1243.5 706.5 L1247.9 710.9 L1251.4 704.7" fill="none" stroke="#f39a2c" stroke-opacity="0.85" stroke-width="1.2" stroke-linejoin="round"/>
<path d="M1066.0 560.0 L1064.1 568.9" fill="none" stroke="#f39a2c" stroke-opacity="0.85" stroke-width="1.2" stroke-linejoin="round"/>
<path d="M1231.3 106.2 L1242.8 109.8 L1250.8 119.5 L1257.6 123.1 L1258.8 133.7 L1262.4 143.5 L1281.0 160.0 L1285.8 176.7 L1299.1 185.6 L1297.9 194.1 L1294.3 203.0 L1286.3 210.1 L1282.8 218.1 L1282.4 231.4 L1280.1 245.6 L1285.4 268.0 L1296.1 285.8 L1300.5 300.0 L1301.4 309.7 L1305.5 315.9 L1300.5 335.5 L1296.1 347.9 L1300.5 363.9 L1307.6 383.4 L1313.0 392.3 L1321.8 397.6 L1330.7 405.6 L1332.5 415.4 L1339.2 423.9 L1336.0 436.0 L1326.7 446.7 L1319.6 460.9 L1310.7 473.3 L1298.3 478.6 L1284.1 482.2 L1275.2 489.3 L1260.1 493.2 L1266.3 501.7 L1280.5 514.1 L1284.1 524.8 L1294.7 549.6 L1301.8 565.6 L1302.0 572.4 L1308.3 581.3 L1314.5 581.0 L1334.0 600.0 L1342.9 616.8 L1350.0 622.1 L1349.1 631.0 L1357.1 642.6 L1369.5 641.7 L1375.7 647.0 L1380.2 656.8 L1391.7 671.9 L1392.6 680.7 L1399.7 694.9 L1405.0 698.5 L1406.8 705.6 L1415.7 710.9 L1417.5 719.8 L1428.1 722.5 L1431.7 728.0 L1437.9 738.7 L1441.4 751.1 L1442.7 766.2 L1440.5 783.0 L1433.4 793.7 L1424.6 800.8 L1419.2 802.6 L1415.7 809.7 L1405.0 813.2 L1390.8 815.9 L1375.7 824.8 L1367.7 827.4 L1346.4 845.2 L1326.9 856.7 L1308.9 866.8 L1291.4 880.7 L1275.2 881.0 L1271.7 884.5 L1257.5 888.1 L1243.3 883.6 L1230.8 884.5 L1221.9 891.6 L1216.6 900.5 L1207.7 914.7 L1197.1 924.5 L1186.4 928.0 L1170.5 926.8 L1154.5 942.2 L1133.2 926.3 L1106.5 913.8 L1088.8 900.5 L1074.6 882.8 L1069.2 870.3 L1066.6 857.9 L1057.7 853.1 L1026.6 853.5 L1000.0 856.1 L990.5 858.1 L970.9 857.6 L953.2 862.9 L944.3 861.2 L933.6 856.7 L919.4 848.7 L907.9 839.9 L898.1 821.2 L896.7 814.5 L891.0 811.5 L878.6 802.6 L866.2 791.9 L862.6 778.6 L853.7 769.7 L846.6 760.0 L831.5 728.0 L827.5 722.5 L896.4 697.6 L905.2 675.4 L927.4 654.1 L929.2 627.5 L932.8 607.9 L934.5 592.0 L942.2 576.5 L953.2 577.4 L962.0 579.2 L970.9 577.4 L979.8 578.6 L987.8 576.9 L995.8 574.2 L996.7 568.0 L1004.7 567.1 L1004.4 567.4 L1007.1 545.2 L1015.6 540.8 L1020.4 533.3 L1038.2 528.3 L1038.2 489.3 L1040.0 483.0 L1041.2 450.2 L1047.0 452.9 L1051.5 436.0 L1054.6 415.4 L1053.7 404.7 L1057.3 392.3 L1063.1 380.7 L1071.5 367.4 L1078.6 351.5 L1088.4 337.2 L1103.5 319.5 L1112.3 307.1 L1122.1 284.0 L1134.5 268.0 L1136.3 259.8 L1138.1 238.5 L1141.6 229.6 L1139.9 222.5 L1140.7 215.4 L1147.0 204.8 L1151.4 194.1 L1158.5 176.4 L1164.2 156.8 L1186.9 146.2 L1192.2 142.3 L1201.1 141.7 L1208.2 137.3 L1211.8 126.6 L1214.4 112.8 L1228.6 112.8 Z" fill="none" stroke="#f39a2c" stroke-opacity="0.75" stroke-width="1.1" stroke-linejoin="round"/>
<text x="1099.0" y="558.2" font-size="16" fill="#4a4f59" font-weight="normal" textLength="100.8" lengthAdjust="spacing" stroke="#ffffff" stroke-opacity="0.55" stroke-width="1.6" paint-order="stroke" font-family="'Liberation Sans',sans-serif">Cochabamba</text>
<text x="784.2" y="426.3" font-size="13" fill="#3a3a3a" font-weight="normal" textLength="69.8" lengthAdjust="spacing" stroke="#ffffff" stroke-opacity="0.55" stroke-width="1.6" paint-order="stroke" font-family="'Liberation Sans',sans-serif">Quillacollo</text>
<text x="1459.5" y="543.5" font-size="12.5" fill="#3a3a3a" font-weight="normal" textLength="43.5" lengthAdjust="spacing" stroke="#ffffff" stroke-opacity="0.55" stroke-width="1.6" paint-order="stroke" font-family="'Liberation Sans',sans-serif">Sacaba</text>
<text x="973.3" y="362.0" font-size="11.5" fill="#6b6b6b" font-weight="normal" textLength="56.9" lengthAdjust="spacing" stroke="#ffffff" stroke-opacity="0.55" stroke-width="1.6" paint-order="stroke" font-family="'Liberation Sans',sans-serif">Tiquipaya</text>
<text x="938.7" y="504.5" font-size="11.5" fill="#6b6b6b" font-weight="normal" textLength="71.1" lengthAdjust="spacing" stroke="#ffffff" stroke-opacity="0.55" stroke-width="1.6" paint-order="stroke" font-family="'Liberation Sans',sans-serif">Colcapirhua</text>
<text x="663.5" y="511.7" font-size="12" fill="#6b6b6b" font-weight="normal" textLength="31.7" lengthAdjust="spacing" stroke="#ffffff" stroke-opacity="0.55" stroke-width="1.6" paint-order="stroke" font-family="'Liberation Sans',sans-serif">Vinto</text>
<text x="604.5" y="695.0" font-size="11.5" fill="#6b6b6b" font-weight="normal" textLength="44.7" lengthAdjust="spacing" stroke="#ffffff" stroke-opacity="0.55" stroke-width="1.6" paint-order="stroke" font-family="'Liberation Sans',sans-serif">Sipesipe</text>
<text x="1508.8" y="632.5" font-size="10.8" fill="#6b6b6b" font-weight="normal" textLength="51.7" lengthAdjust="spacing" stroke="#ffffff" stroke-opacity="0.55" stroke-width="1.6" paint-order="stroke" font-family="'Liberation Sans',sans-serif">Mollocota</text>
<text x="1370.9" y="822.8" font-size="10.8" fill="#6b6b6b" font-weight="normal" textLength="39.8" lengthAdjust="spacing" stroke="#ffffff" stroke-opacity="0.55" stroke-width="1.6" paint-order="stroke" font-family="'Liberation Sans',sans-serif">Canelas</text>
<text x="1748.0" y="160.8" font-size="10.5" fill="#6b6b6b" font-weight="normal" textLength="28.5" lengthAdjust="spacing" stroke="#ffffff" stroke-opacity="0.55" stroke-width="1.6" paint-order="stroke" font-family="'Liberation Sans',sans-serif">Santa</text>
<text x="1747.5" y="173.0" font-size="10.5" fill="#6b6b6b" font-weight="normal" textLength="29.5" lengthAdjust="spacing" stroke="#ffffff" stroke-opacity="0.55" stroke-width="1.6" paint-order="stroke" font-family="'Liberation Sans',sans-serif">Isabel</text>
<text x="1417.5" y="946.3" font-size="10.8" fill="#6b6b6b" font-weight="normal" textLength="21.9" lengthAdjust="spacing" stroke="#ffffff" stroke-opacity="0.55" stroke-width="1.6" paint-order="stroke" font-family="'Liberation Sans',sans-serif">Villa</text>
</svg>
</div>
<div id="top">
<div id="logo"><svg width="113" height="40" viewBox="0 0 113 40" style="position:absolute;left:0;top:0"><defs>
<linearGradient id="g1" gradientUnits="userSpaceOnUse" x1="0" y1="0" x2="0" y2="40"><stop offset="0.705" stop-color="#fbb911"/><stop offset="0.705" stop-color="#f7941d"/></linearGradient>
<linearGradient id="g2" gradientUnits="userSpaceOnUse" x1="0" y1="0" x2="0" y2="40"><stop offset="0.66" stop-color="#f0557f"/><stop offset="0.66" stop-color="#c4175b"/></linearGradient>
<linearGradient id="g3" gradientUnits="userSpaceOnUse" x1="0" y1="0" x2="0" y2="40"><stop offset="0.62" stop-color="#7352a8"/><stop offset="0.62" stop-color="#4b2a82"/></linearGradient>
<linearGradient id="g4" gradientUnits="userSpaceOnUse" x1="0" y1="0" x2="0" y2="40"><stop offset="0.575" stop-color="#4cc8ee"/><stop offset="0.575" stop-color="#00b2e3"/></linearGradient>
<linearGradient id="g5" gradientUnits="userSpaceOnUse" x1="0" y1="0" x2="0" y2="40"><stop offset="0.50" stop-color="#4fc4a8"/><stop offset="0.50" stop-color="#009b77"/></linearGradient>
</defs><text font-family="'Liberation Sans',sans-serif" font-weight="bold" stroke-width="0.8" stroke-linejoin="round"><tspan x="11.80" y="31.35" font-size="30.60" textLength="22.54" lengthAdjust="spacingAndGlyphs" fill="url(#g1)" stroke="url(#g1)">C</tspan><tspan x="33.50" y="31.15" font-size="29.30" textLength="18.71" lengthAdjust="spacingAndGlyphs" fill="url(#g2)" stroke="url(#g2)">o</tspan><tspan x="50.90" y="31.15" font-size="29.30" textLength="16.86" lengthAdjust="spacingAndGlyphs" fill="url(#g3)" stroke="url(#g3)">c</tspan><tspan x="66.20" y="31.40" font-size="30.80" textLength="18.44" lengthAdjust="spacingAndGlyphs" fill="url(#g4)" stroke="url(#g4)">h</tspan><tspan x="83.50" y="31.15" font-size="29.30" textLength="17.27" lengthAdjust="spacingAndGlyphs" fill="url(#g5)" stroke="url(#g5)">a</tspan></text></svg></div>
<div id="ttl"><b>Portal catastral Cercado</b><span>Infraestructura de datos espaciales de Cochabamba</span></div>
</div>
<div id="search">
<div id="sbtn"><svg width="20" height="20" viewBox="0 0 24 24" fill="none" stroke="#fff" stroke-width="1.5" stroke-linecap="round" stroke-linejoin="round" style="position:absolute;left:7px;top:6px"><circle cx="11" cy="11" r="8"/><path d="m21 21-4.3-4.3"/></svg>
</div>
<div id="sinp">Realiza una búsqueda...</div>
</div>
<div id="panel">
<h1>Capas de información</h1>
<div class="card" style="top:109px"><div class="th"><svg width="60" height="60" viewBox="0 0 60 60" style="display:block"><rect width="60" height="60" fill="#efefef"/><g transform="translate(-50.70,-5.70) scale(0.0690)"><path d="M0.0 0.0 L1830.0 100.0 L1848.0 122.0 L1866.0 149.0 L1879.0 180.0 L1906.0 213.0 L1920.0 217.0 L1908.0 229.0 L1901.0 255.0 L1813.0 300.0 L1790.0 319.0 L1745.0 336.0 L1697.5 341.0 L1680.0 345.0 L1665.0 358.5 L1654.0 376.0 L1665.0 388.5 L1677.5 413.5 L1684.0 448.5 L1685.0 486.0 L1681.0 522.5 L1672.5 552.0 L1655.0 550.0 L1620.0 541.0 L1602.5 537.0 L1591.0 541.5 L1577.5 528.5 L1560.0 521.0 L1540.0 508.5 L1527.5 498.5 L1515.0 501.0 L1502.5 491.0 L1485.0 478.5 L1460.0 473.5 L1397.5 468.5 L1372.5 458.5 L1350.0 450.0 L1337.0 444.0 L1322.0 435.0 L1296.0 429.0 L1267.0 430.0 L1244.0 423.0 L1227.0 415.0 L1211.0 406.0 L1194.0 400.0 L1182.0 395.0 L1171.0 384.0 L1155.0 370.0 L1131.0 346.0 L1107.0 348.0 L1088.0 337.0 L1080.0 334.0 L1070.0 330.0 L1055.0 322.5 L1037.5 312.5 L1015.0 302.5 L1000.0 294.0 L980.0 291.0 L965.0 294.0 L957.5 290.0 L940.0 286.0 L917.5 280.0 L892.5 279.0 L885.0 284.0 L870.0 284.0 L860.0 294.0 L847.5 295.0 L830.0 292.5 L821.0 295.0 L812.0 310.0 L802.5 336.0 L795.0 346.0 L760.0 361.0 L720.0 368.5 L710.0 381.0 L662.5 401.0 L627.5 413.5 L624.0 426.0 L612.5 433.5 L620.0 446.0 L605.0 461.0 L590.0 465.0 L582.5 478.5 L565.0 496.0 L545.0 526.0 L510.0 572.0 L482.5 582.0 L497.5 587.0 L485.0 596.0 L500.0 609.5 L501.0 624.5 L491.0 634.5 L492.5 644.5 L474.0 646.0 L477.5 653.0 L461.0 674.5 L480.0 672.0 L486.0 657.0 L505.0 667.0 L510.0 674.5 L522.5 682.0 L535.0 693.0 L537.5 702.0 L534.0 708.0 L545.0 711.0 L551.0 716.0 L542.5 724.5 L545.0 729.5 L560.0 732.0 L570.0 745.0 L585.0 757.5 L602.5 770.0 L610.0 785.0 L626.0 801.0 L604.0 792.5 L605.0 797.5 L617.5 810.0 L621.0 830.0 L611.0 835.0 L615.0 846.0 L626.0 851.0 L625.0 865.0 L641.0 880.0 L636.0 882.5 L637.5 889.0 L642.5 890.0 L645.0 910.0 L654.0 927.5 L0.0 946.0 Z" fill="#e3e8e3"/><path d="M700 531 L1038 518 L1236 509 M1252 462 L1480 537 L1920 605 M700 531 L660 700 L667 946 M1375 826 L1396 946" fill="none" stroke="#fff" stroke-opacity="0.5" stroke-width="14"/><path d="M1231.3 106.2 L1242.8 109.8 L1250.8 119.5 L1257.6 123.1 L1258.8 133.7 L1262.4 143.5 L1281.0 160.0 L1285.8 176.7 L1299.1 185.6 L1297.9 194.1 L1294.3 203.0 L1286.3 210.1 L1282.8 218.1 L1282.4 231.4 L1280.1 245.6 L1285.4 268.0 L1296.1 285.8 L1300.5 300.0 L1301.4 309.7 L1305.5 315.9 L1300.5 335.5 L1296.1 347.9 L1300.5 363.9 L1307.6 383.4 L1313.0 392.3 L1321.8 397.6 L1330.7 405.6 L1332.5 415.4 L1339.2 423.9 L1336.0 436.0 L1326.7 446.7 L1319.6 460.9 L1310.7 473.3 L1298.3 478.6 L1284.1 482.2 L1275.2 489.3 L1260.1 493.2 L1266.3 501.7 L1280.5 514.1 L1284.1 524.8 L1294.7 549.6 L1301.8 565.6 L1302.0 572.4 L1308.3 581.3 L1314.5 581.0 L1334.0 600.0 L1342.9 616.8 L1350.0 622.1 L1349.1 631.0 L1357.1 642.6 L1369.5 641.7 L1375.7 647.0 L1380.2 656.8 L1391.7 671.9 L1392.6 680.7 L1399.7 694.9 L1405.0 698.5 L1406.8 705.6 L1415.7 710.9 L1417.5 719.8 L1428.1 722.5 L1431.7 728.0 L1437.9 738.7 L1441.4 751.1 L1442.7 766.2 L1440.5 783.0 L1433.4 793.7 L1424.6 800.8 L1419.2 802.6 L1415.7 809.7 L1405.0 813.2 L1390.8 815.9 L1375.7 824.8 L1367.7 827.4 L1346.4 845.2 L1326.9 856.7 L1308.9 866.8 L1291.4 880.7 L1275.2 881.0 L1271.7 884.5 L1257.5 888.1 L1243.3 883.6 L1230.8 884.5 L1221.9 891.6 L1216.6 900.5 L1207.7 914.7 L1197.1 924.5 L1186.4 928.0 L1170.5 926.8 L1154.5 942.2 L1133.2 926.3 L1106.5 913.8 L1088.8 900.5 L1074.6 882.8 L1069.2 870.3 L1066.6 857.9 L1057.7 853.1 L1026.6 853.5 L1000.0 856.1 L990.5 858.1 L970.9 857.6 L953.2 862.9 L944.3 861.2 L933.6 856.7 L919.4 848.7 L907.9 839.9 L898.1 821.2 L896.7 814.5 L891.0 811.5 L878.6 802.6 L866.2 791.9 L862.6 778.6 L853.7 769.7 L846.6 760.0 L831.5 728.0 L827.5 722.5 L896.4 697.6 L905.2 675.4 L927.4 654.1 L929.2 627.5 L932.8 607.9 L934.5 592.0 L942.2 576.5 L953.2 577.4 L962.0 579.2 L970.9 577.4 L979.8 578.6 L987.8 576.9 L995.8 574.2 L996.7 568.0 L1004.7 567.1 L1004.4 567.4 L1007.1 545.2 L1015.6 540.8 L1020.4 533.3 L1038.2 528.3 L1038.2 489.3 L1040.0 483.0 L1041.2 450.2 L1047.0 452.9 L1051.5 436.0 L1054.6 415.4 L1053.7 404.7 L1057.3 392.3 L1063.1 380.7 L1071.5 367.4 L1078.6 351.5 L1088.4 337.2 L1103.5 319.5 L1112.3 307.1 L1122.1 284.0 L1134.5 268.0 L1136.3 259.8 L1138.1 238.5 L1141.6 229.6 L1139.9 222.5 L1140.7 215.4 L1147.0 204.8 L1151.4 194.1 L1158.5 176.4 L1164.2 156.8 L1186.9 146.2 L1192.2 142.3 L1201.1 141.7 L1208.2 137.3 L1211.8 126.6 L1214.4 112.8 L1228.6 112.8 Z" fill="#f5b92b" fill-opacity="0.75"/></g><rect width="60" height="60" fill="#f6c23a" fill-opacity="0.62"/><g fill="none" stroke="#fff" stroke-width="2.6" stroke-linecap="round" stroke-linejoin="round"><rect x="14.3" y="14.3" width="31.4" height="31.4" rx="6"/><path d="M22.4 33.1 L27.6 37.1 L37.2 24.5"/></g></svg></div><div class="lb">Distrito</div></div>
<div class="card" style="top:181px"><div class="th"><svg width="60" height="60" viewBox="0 0 60 60" style="display:block"><rect width="60" height="60" fill="#efefef"/><g transform="translate(-44.50,-4.10) scale(0.0650)"><path d="M0.0 0.0 L1830.0 100.0 L1848.0 122.0 L1866.0 149.0 L1879.0 180.0 L1906.0 213.0 L1920.0 217.0 L1908.0 229.0 L1901.0 255.0 L1813.0 300.0 L1790.0 319.0 L1745.0 336.0 L1697.5 341.0 L1680.0 345.0 L1665.0 358.5 L1654.0 376.0 L1665.0 388.5 L1677.5 413.5 L1684.0 448.5 L1685.0 486.0 L1681.0 522.5 L1672.5 552.0 L1655.0 550.0 L1620.0 541.0 L1602.5 537.0 L1591.0 541.5 L1577.5 528.5 L1560.0 521.0 L1540.0 508.5 L1527.5 498.5 L1515.0 501.0 L1502.5 491.0 L1485.0 478.5 L1460.0 473.5 L1397.5 468.5 L1372.5 458.5 L1350.0 450.0 L1337.0 444.0 L1322.0 435.0 L1296.0 429.0 L1267.0 430.0 L1244.0 423.0 L1227.0 415.0 L1211.0 406.0 L1194.0 400.0 L1182.0 395.0 L1171.0 384.0 L1155.0 370.0 L1131.0 346.0 L1107.0 348.0 L1088.0 337.0 L1080.0 334.0 L1070.0 330.0 L1055.0 322.5 L1037.5 312.5 L1015.0 302.5 L1000.0 294.0 L980.0 291.0 L965.0 294.0 L957.5 290.0 L940.0 286.0 L917.5 280.0 L892.5 279.0 L885.0 284.0 L870.0 284.0 L860.0 294.0 L847.5 295.0 L830.0 292.5 L821.0 295.0 L812.0 310.0 L802.5 336.0 L795.0 346.0 L760.0 361.0 L720.0 368.5 L710.0 381.0 L662.5 401.0 L627.5 413.5 L624.0 426.0 L612.5 433.5 L620.0 446.0 L605.0 461.0 L590.0 465.0 L582.5 478.5 L565.0 496.0 L545.0 526.0 L510.0 572.0 L482.5 582.0 L497.5 587.0 L485.0 596.0 L500.0 609.5 L501.0 624.5 L491.0 634.5 L492.5 644.5 L474.0 646.0 L477.5 653.0 L461.0 674.5 L480.0 672.0 L486.0 657.0 L505.0 667.0 L510.0 674.5 L522.5 682.0 L535.0 693.0 L537.5 702.0 L534.0 708.0 L545.0 711.0 L551.0 716.0 L542.5 724.5 L545.0 729.5 L560.0 732.0 L570.0 745.0 L585.0 757.5 L602.5 770.0 L610.0 785.0 L626.0 801.0 L604.0 792.5 L605.0 797.5 L617.5 810.0 L621.0 830.0 L611.0 835.0 L615.0 846.0 L626.0 851.0 L625.0 865.0 L641.0 880.0 L636.0 882.5 L637.5 889.0 L642.5 890.0 L645.0 910.0 L654.0 927.5 L0.0 946.0 Z" fill="#e3e8e3"/><path d="M700 531 L1038 518 L1236 509 M1252 462 L1480 537 L1920 605 M700 531 L660 700 L667 946 M1375 826 L1396 946" fill="none" stroke="#fff" stroke-opacity="0.5" stroke-width="14"/><path d="M1231.3 106.2 L1242.8 109.8 L1250.8 119.5 L1257.6 123.1 L1258.8 133.7 L1262.4 143.5 L1281.0 160.0 L1285.8 176.7 L1299.1 185.6 L1297.9 194.1 L1294.3 203.0 L1286.3 210.1 L1282.8 218.1 L1282.4 231.4 L1280.1 245.6 L1285.4 268.0 L1296.1 285.8 L1300.5 300.0 L1301.4 309.7 L1305.5 315.9 L1300.5 335.5 L1296.1 347.9 L1300.5 363.9 L1307.6 383.4 L1313.0 392.3 L1321.8 397.6 L1330.7 405.6 L1332.5 415.4 L1339.2 423.9 L1336.0 436.0 L1326.7 446.7 L1319.6 460.9 L1310.7 473.3 L1298.3 478.6 L1284.1 482.2 L1275.2 489.3 L1260.1 493.2 L1266.3 501.7 L1280.5 514.1 L1284.1 524.8 L1294.7 549.6 L1301.8 565.6 L1302.0 572.4 L1308.3 581.3 L1314.5 581.0 L1334.0 600.0 L1342.9 616.8 L1350.0 622.1 L1349.1 631.0 L1357.1 642.6 L1369.5 641.7 L1375.7 647.0 L1380.2 656.8 L1391.7 671.9 L1392.6 680.7 L1399.7 694.9 L1405.0 698.5 L1406.8 705.6 L1415.7 710.9 L1417.5 719.8 L1428.1 722.5 L1431.7 728.0 L1437.9 738.7 L1441.4 751.1 L1442.7 766.2 L1440.5 783.0 L1433.4 793.7 L1424.6 800.8 L1419.2 802.6 L1415.7 809.7 L1405.0 813.2 L1390.8 815.9 L1375.7 824.8 L1367.7 827.4 L1346.4 845.2 L1326.9 856.7 L1308.9 866.8 L1291.4 880.7 L1275.2 881.0 L1271.7 884.5 L1257.5 888.1 L1243.3 883.6 L1230.8 884.5 L1221.9 891.6 L1216.6 900.5 L1207.7 914.7 L1197.1 924.5 L1186.4 928.0 L1170.5 926.8 L1154.5 942.2 L1133.2 926.3 L1106.5 913.8 L1088.8 900.5 L1074.6 882.8 L1069.2 870.3 L1066.6 857.9 L1057.7 853.1 L1026.6 853.5 L1000.0 856.1 L990.5 858.1 L970.9 857.6 L953.2 862.9 L944.3 861.2 L933.6 856.7 L919.4 848.7 L907.9 839.9 L898.1 821.2 L896.7 814.5 L891.0 811.5 L878.6 802.6 L866.2 791.9 L862.6 778.6 L853.7 769.7 L846.6 760.0 L831.5 728.0 L827.5 722.5 L896.4 697.6 L905.2 675.4 L927.4 654.1 L929.2 627.5 L932.8 607.9 L934.5 592.0 L942.2 576.5 L953.2 577.4 L962.0 579.2 L970.9 577.4 L979.8 578.6 L987.8 576.9 L995.8 574.2 L996.7 568.0 L1004.7 567.1 L1004.4 567.4 L1007.1 545.2 L1015.6 540.8 L1020.4 533.3 L1038.2 528.3 L1038.2 489.3 L1040.0 483.0 L1041.2 450.2 L1047.0 452.9 L1051.5 436.0 L1054.6 415.4 L1053.7 404.7 L1057.3 392.3 L1063.1 380.7 L1071.5 367.4 L1078.6 351.5 L1088.4 337.2 L1103.5 319.5 L1112.3 307.1 L1122.1 284.0 L1134.5 268.0 L1136.3 259.8 L1138.1 238.5 L1141.6 229.6 L1139.9 222.5 L1140.7 215.4 L1147.0 204.8 L1151.4 194.1 L1158.5 176.4 L1164.2 156.8 L1186.9 146.2 L1192.2 142.3 L1201.1 141.7 L1208.2 137.3 L1211.8 126.6 L1214.4 112.8 L1228.6 112.8 Z" fill="#9b8bc4" fill-opacity="0.7" stroke="#8a78b8" stroke-width="6"/><path d="M1088.4 337.2 L1094.6 342.6 L1107.0 347.9 L1121.2 347.5 L1131.5 345.8 L1154.9 370.1 L1170.9 384.3 L1181.6 395.0 L1194.0 400.3 L1206.4 403.0 L1210.9 406.5 L1220.6 410.9 L1226.9 417.1 L1228.1 411.0 L1233.0 418.9 L1243.7 423.4 L1251.7 421.6 L1256.1 426.0 L1266.8 430.5 L1275.7 429.6 L1279.2 426.0 L1284.6 429.6 L1295.2 428.7 L1304.1 431.4 L1305.9 428.7 L1311.2 433.1 L1321.8 434.9 L1336.0 436.0" fill="none" stroke="#8a78b8" stroke-opacity="0.8" stroke-width="7"/><path d="M1063.1 380.7 L1078.6 387.0 L1094.6 398.5 L1107.0 410.0 L1115.9 424.2 L1123.0 431.4 L1133.6 436.0 L1150.0 437.0 L1167.8 444.0 L1177.6 437.8 L1211.3 441.3 L1229.0 449.3 L1237.9 454.6 L1251.2 460.9" fill="none" stroke="#8a78b8" stroke-opacity="0.8" stroke-width="7"/><path d="M1146.5 560.3 L1165.1 569.2 L1182.9 578.0 L1192.6 574.5 L1194.4 583.4 L1195.5 604.4 L1194.1 608.8 L1197.3 623.0 L1203.5 628.9 L1213.3 627.5 L1221.3 629.2 L1227.5 623.6 L1234.6 620.4 L1245.2 612.9 L1252.3 614.2 L1266.5 627.5 L1273.6 638.1 L1279.0 648.8 L1279.9 661.2 L1284.3 664.8 L1295.8 665.1" fill="none" stroke="#8a78b8" stroke-opacity="0.8" stroke-width="7"/><path d="M1019.5 533.3 L1020.4 547.9 L1044.4 547.0 L1066.6 551.4 L1064.3 568.8 L1068.4 569.5 L1071.0 552.3 L1079.9 554.1 L1091.4 552.3 L1092.0 560.3 L1083.5 570.9 L1119.2 604.4 L1119.2 613.3 L1105.5 632.8 L1109.4 638.1 L1111.2 642.6 L1115.6 643.5 L1130.7 633.7 L1139.6 635.5 L1140.5 643.5 L1148.5 650.6 L1152.0 656.8 L1160.0 656.8 L1170.7 663.0 L1186.6 669.2 L1213.3 673.6 L1225.7 671.5 L1234.6 676.3" fill="none" stroke="#8a78b8" stroke-opacity="0.8" stroke-width="7"/><path d="M1334.0 600.0 L1318.9 615.9 L1307.4 621.3 L1300.3 627.1 L1302.9 634.6 L1305.6 639.9 L1297.6 648.8 L1295.8 664.8 L1294.9 675.4 L1303.8 692.3 L1296.4 697.6 L1307.4 719.8 L1308.8 728.0 L1313.6 734.2" fill="none" stroke="#8a78b8" stroke-opacity="0.8" stroke-width="7"/><path d="M1197.3 623.0 L1204.4 631.0 L1222.1 659.4 L1234.6 676.3 L1239.9 684.3 L1242.6 693.2 L1251.4 704.7 L1264.8 709.1 L1271.9 716.3 L1274.5 728.0 L1276.3 728.0 L1284.3 735.1 L1293.2 745.8 L1294.9 752.0 L1300.3 748.4 L1304.7 755.5 L1312.7 760.8 L1311.8 772.4 L1310.0 783.0 L1316.3 786.6 L1325.1 794.6 L1337.6 799.0 L1350.9 800.8 L1357.1 806.1 L1358.0 813.2 L1366.9 820.3 L1368.1 826.5" fill="none" stroke="#8a78b8" stroke-opacity="0.8" stroke-width="7"/></g></svg></div><div class="lb">Comuna</div></div>
<div class="card" style="top:253px"><div class="th"><svg width="60" height="60" viewBox="0 0 60 60" style="display:block"><rect width="60" height="60" fill="#f0f0f0"/><path d="M11 0 L60 0 L60 18 Q45 10 30 4 Z" fill="#e3e8e3"/><path d="M0 23 L60 23 M20 10 L30 60 M10 40 L40 20 M35 25 L55 50" stroke="#fff" stroke-opacity="0.6" stroke-width="0.6" fill="none"/><rect x="37" y="25.5" width="3.5" height="5" rx="1" fill="#d5d8d8" transform="rotate(-20 39 28)"/><g fill="#1fb0e0" fill-opacity="0.6"><circle cx="23.9" cy="3.6" r="1.0"/><circle cx="24.3" cy="5.8" r="1.0"/><circle cx="26.1" cy="7.8" r="1.0"/><circle cx="28.7" cy="7.4" r="1.0"/><circle cx="32.9" cy="8.1" r="1.0"/><circle cx="29.8" cy="10.0" r="1.0"/><circle cx="37.6" cy="10.5" r="1.0"/><circle cx="22.2" cy="11.5" r="1.0"/><circle cx="23.2" cy="13.3" r="1.0"/><circle cx="26.9" cy="14.4" r="1.0"/><circle cx="30.9" cy="14.1" r="1.0"/><circle cx="33.2" cy="12.2" r="1.0"/><circle cx="36.1" cy="14.1" r="1.0"/><circle cx="45.7" cy="15.4" r="1.0"/><circle cx="31.7" cy="15.9" r="1.0"/><circle cx="34.6" cy="16.7" r="1.0"/><circle cx="22.8" cy="17.4" r="1.0"/><circle cx="28.7" cy="17.8" r="1.0"/><circle cx="37.6" cy="17.4" r="1.0"/><circle cx="40.6" cy="17.4" r="1.0"/><circle cx="43.5" cy="16.7" r="1.0"/><circle cx="45.0" cy="18.4" r="1.0"/><circle cx="21.7" cy="19.6" r="1.0"/><circle cx="27.2" cy="20.0" r="1.0"/><circle cx="30.9" cy="19.2" r="1.0"/><circle cx="33.9" cy="20.0" r="1.0"/><circle cx="36.5" cy="20.4" r="1.0"/><circle cx="17.2" cy="21.5" r="1.0"/><circle cx="18.4" cy="22.6" r="1.0"/><circle cx="23.9" cy="21.8" r="1.0"/><circle cx="28.0" cy="22.2" r="1.0"/><circle cx="31.7" cy="22.2" r="1.0"/><circle cx="34.6" cy="21.8" r="1.0"/><circle cx="36.9" cy="21.5" r="1.0"/><circle cx="17.2" cy="25.3" r="1.0"/><circle cx="21.3" cy="25.3" r="1.0"/><circle cx="24.3" cy="24.8" r="1.0"/><circle cx="29.5" cy="24.8" r="1.0"/><circle cx="32.4" cy="24.8" r="1.0"/><circle cx="34.6" cy="25.5" r="1.0"/><circle cx="38.7" cy="25.2" r="1.0"/><circle cx="25.8" cy="28.5" r="1.0"/><circle cx="29.8" cy="27.4" r="1.0"/><circle cx="33.2" cy="26.6" r="1.0"/><circle cx="36.1" cy="28.1" r="1.0"/><circle cx="13.5" cy="30.7" r="1.0"/><circle cx="29.5" cy="30.7" r="1.0"/><circle cx="32.4" cy="31.1" r="1.0"/><circle cx="34.6" cy="30.3" r="1.0"/><circle cx="39.1" cy="32.6" r="1.0"/><circle cx="43.9" cy="32.9" r="1.0"/><circle cx="18.7" cy="33.7" r="1.0"/><circle cx="26.5" cy="34.8" r="1.0"/><circle cx="30.6" cy="34.0" r="1.0"/><circle cx="32.4" cy="33.3" r="1.0"/><circle cx="34.6" cy="34.4" r="1.0"/><circle cx="36.9" cy="33.3" r="1.0"/><circle cx="42.0" cy="34.8" r="1.0"/><circle cx="46.5" cy="34.6" r="1.0"/><circle cx="31.7" cy="37.4" r="1.0"/><circle cx="36.1" cy="38.9" r="1.0"/><circle cx="39.5" cy="36.6" r="1.0"/><circle cx="39.5" cy="38.9" r="1.0"/><circle cx="41.7" cy="38.9" r="1.0"/><circle cx="44.3" cy="37.0" r="1.0"/><circle cx="10.2" cy="39.8" r="1.0"/><circle cx="20.6" cy="40.1" r="1.0"/><circle cx="33.9" cy="40.3" r="1.0"/><circle cx="33.2" cy="41.6" r="1.0"/><circle cx="49.1" cy="41.1" r="1.0"/><circle cx="18.4" cy="42.9" r="1.0"/><circle cx="38.0" cy="43.3" r="1.0"/><circle cx="41.7" cy="42.9" r="1.0"/><circle cx="47.2" cy="43.7" r="1.0"/><circle cx="11.7" cy="45.0" r="1.0"/><circle cx="23.9" cy="44.8" r="1.0"/><circle cx="29.8" cy="43.7" r="1.0"/><circle cx="17.6" cy="47.4" r="1.0"/><circle cx="16.1" cy="48.9" r="1.0"/><circle cx="39.8" cy="46.6" r="1.0"/><circle cx="42.4" cy="46.6" r="1.0"/><circle cx="45.4" cy="46.6" r="1.0"/><circle cx="49.4" cy="46.5" r="1.0"/><circle cx="32.4" cy="48.1" r="1.0"/><circle cx="34.6" cy="47.4" r="1.0"/><circle cx="34.6" cy="48.9" r="1.0"/><circle cx="38.3" cy="48.5" r="1.0"/><circle cx="25.8" cy="49.0" r="1.0"/><circle cx="40.9" cy="50.0" r="1.0"/><circle cx="44.6" cy="50.9" r="1.0"/><circle cx="47.7" cy="50.9" r="1.0"/><circle cx="50.7" cy="52.0" r="1.0"/><circle cx="29.2" cy="50.6" r="1.0"/><circle cx="34.0" cy="52.4" r="1.0"/><circle cx="25.2" cy="52.7" r="1.0"/><circle cx="28.0" cy="53.3" r="1.0"/><circle cx="26.5" cy="54.8" r="1.0"/><circle cx="25.5" cy="56.6" r="1.0"/><circle cx="30.2" cy="15.2" r="1.0"/><circle cx="32.4" cy="14.8" r="1.0"/><circle cx="33.2" cy="17.8" r="1.0"/><circle cx="35.4" cy="18.5" r="1.0"/><circle cx="30.9" cy="21.1" r="1.0"/><circle cx="33.2" cy="21.1" r="1.0"/><circle cx="35.4" cy="22.9" r="1.0"/><circle cx="30.9" cy="23.7" r="1.0"/><circle cx="33.2" cy="23.7" r="1.0"/><circle cx="33.9" cy="25.9" r="1.0"/><circle cx="31.7" cy="25.9" r="1.0"/><circle cx="30.9" cy="31.8" r="1.0"/><circle cx="33.2" cy="32.2" r="1.0"/><circle cx="31.7" cy="34.8" r="1.0"/><circle cx="29.5" cy="33.3" r="1.0"/></g></svg></div><div class="lb">Educación</div></div>
<div class="card" style="top:325px"><div class="th"><svg width="60" height="60" viewBox="0 0 60 60" style="display:block"><rect width="60" height="60" fill="#f0f0f0"/><path d="M32 0 L60 0 L60 14 Q48 8 32 0 Z" fill="#e3e8e3"/><path d="M0 23 L60 23 M20 10 L30 60 M10 40 L40 20 M35 25 L55 50" stroke="#fff" stroke-opacity="0.6" stroke-width="0.6" fill="none"/><rect x="38" y="27" width="5" height="6.5" rx="1.5" fill="#d0d5d5" transform="rotate(-20 40 30)"/><g fill="#2fae92" fill-opacity="0.6"><circle cx="19.7" cy="7.3" r="1.2"/><circle cx="22.4" cy="5.2" r="1.2"/><circle cx="24.6" cy="4.3" r="1.2"/><circle cx="26.9" cy="5.3" r="1.2"/><circle cx="23.5" cy="8.7" r="1.2"/><circle cx="25.0" cy="10.0" r="1.2"/><circle cx="31.7" cy="9.8" r="1.2"/><circle cx="28.3" cy="12.7" r="1.2"/><circle cx="30.2" cy="14.1" r="1.2"/><circle cx="33.9" cy="12.7" r="1.2"/><circle cx="19.5" cy="17.8" r="1.2"/><circle cx="15.8" cy="18.9" r="1.2"/><circle cx="33.5" cy="16.3" r="1.2"/><circle cx="37.6" cy="15.7" r="1.2"/><circle cx="39.8" cy="15.9" r="1.2"/><circle cx="45.9" cy="15.5" r="1.2"/><circle cx="38.0" cy="18.1" r="1.2"/><circle cx="30.9" cy="18.5" r="1.2"/><circle cx="33.2" cy="18.5" r="1.2"/><circle cx="28.7" cy="20.4" r="1.2"/><circle cx="31.3" cy="20.7" r="1.2"/><circle cx="33.9" cy="20.7" r="1.2"/><circle cx="36.1" cy="20.7" r="1.2"/><circle cx="13.9" cy="22.2" r="1.2"/><circle cx="12.4" cy="23.7" r="1.2"/><circle cx="22.8" cy="22.2" r="1.2"/><circle cx="26.5" cy="23.3" r="1.2"/><circle cx="30.2" cy="22.9" r="1.2"/><circle cx="32.4" cy="22.9" r="1.2"/><circle cx="34.6" cy="22.9" r="1.2"/><circle cx="36.5" cy="23.3" r="1.2"/><circle cx="17.2" cy="25.3" r="1.2"/><circle cx="19.8" cy="24.4" r="1.2"/><circle cx="22.1" cy="24.8" r="1.2"/><circle cx="30.9" cy="25.2" r="1.2"/><circle cx="33.2" cy="25.2" r="1.2"/><circle cx="35.4" cy="25.2" r="1.2"/><circle cx="38.3" cy="26.3" r="1.2"/><circle cx="26.1" cy="27.0" r="1.2"/><circle cx="32.4" cy="27.0" r="1.2"/><circle cx="34.3" cy="27.4" r="1.2"/><circle cx="22.1" cy="29.2" r="1.2"/><circle cx="34.6" cy="29.2" r="1.2"/><circle cx="6.9" cy="32.9" r="1.2"/><circle cx="30.2" cy="33.7" r="1.2"/><circle cx="32.0" cy="32.2" r="1.2"/><circle cx="36.9" cy="33.3" r="1.2"/><circle cx="36.5" cy="35.2" r="1.2"/><circle cx="39.8" cy="35.2" r="1.2"/><circle cx="42.4" cy="35.5" r="1.2"/><circle cx="13.7" cy="36.1" r="1.2"/><circle cx="33.2" cy="37.0" r="1.2"/><circle cx="36.1" cy="37.0" r="1.2"/><circle cx="32.8" cy="40.9" r="1.2"/><circle cx="29.2" cy="45.5" r="1.2"/><circle cx="48.9" cy="44.3" r="1.2"/><circle cx="44.3" cy="46.9" r="1.2"/><circle cx="39.5" cy="47.4" r="1.2"/><circle cx="14.3" cy="47.0" r="1.2"/><circle cx="13.9" cy="48.5" r="1.2"/><circle cx="28.0" cy="50.7" r="1.2"/><circle cx="27.6" cy="52.2" r="1.2"/><circle cx="30.9" cy="50.3" r="1.2"/><circle cx="45.0" cy="50.7" r="1.2"/><circle cx="45.7" cy="51.8" r="1.2"/><circle cx="33.4" cy="54.6" r="1.2"/><circle cx="45.6" cy="56.6" r="1.2"/><circle cx="31.7" cy="21.8" r="1.2"/><circle cx="33.5" cy="21.8" r="1.2"/><circle cx="32.8" cy="24.1" r="1.2"/><circle cx="34.3" cy="24.1" r="1.2"/><circle cx="31.7" cy="24.1" r="1.2"/><circle cx="33.2" cy="26.3" r="1.2"/><circle cx="35.0" cy="26.3" r="1.2"/><circle cx="35.8" cy="21.8" r="1.2"/><circle cx="29.8" cy="21.8" r="1.2"/></g></svg></div><div class="lb">Salud</div></div>
</div>
<div id="bar">
<div class="btn" id="b1"><svg width="24" height="24" viewBox="0 0 24 24" fill="none" stroke="#fff" stroke-width="1.5" stroke-linecap="round" stroke-linejoin="round"><path d="M3.6 3.3 L8.7 2.1 L15.3 3.1 L20.4 2.8 Q21.45 2.75 21.45 3.8 L21.45 19.5 Q21.45 20.5 20.4 20.7 L15.3 21.8 L8.7 20.2 L3.6 20.9 Q2.6 21 2.6 20 L2.6 4.3 Q2.6 3.5 3.6 3.3 Z"/><path d="M8.7 2.1V20.2"/><path d="M15.3 3.1V21.8"/></svg>
</div>
<div class="sep" style="top:109px"></div>
<div class="btn" id="b2"><svg width="24" height="24" viewBox="0 0 24 24" fill="none" stroke="#fff" stroke-width="1.5" stroke-linecap="round" stroke-linejoin="round"><circle cx="12" cy="12" r="9.4"/><path d="M13.9 2.8 C13.7 4.5 13.4 6 12.2 7 C11 8 9.4 8.2 8.6 9.2 C7.8 10.3 8.3 11.6 8.1 12.8 C7.9 14.3 7 15.6 5.3 15.8 C4.5 15.9 3.6 15.9 2.9 15.9"/><path d="M21.3 11.25 H17 C15 11.25 13.6 12.4 13.5 14 C13.4 15.6 14.6 16.8 16.2 17.1 C17.4 17.3 17.9 18.2 18.4 19.2"/></svg>
</div>
<div class="btn" id="b3"><svg width="24" height="24" viewBox="0 0 24 24" fill="none" stroke="#fff" stroke-width="1.5" stroke-linecap="round" stroke-linejoin="round"><rect x="2.7" y="2.7" width="18.6" height="18.6" rx="2"/><circle cx="8.6" cy="8.2" r="2.1"/><path d="M21.3 15.6 L17 11.7 Q15.6 10.5 14.3 11.8 L4.6 21"/></svg>
</div>
<div class="btn" id="b4"><svg width="24" height="24" viewBox="0 0 24 24" fill="none" stroke="#fff" stroke-width="1.5" stroke-linecap="round" stroke-linejoin="round"><path d="M12.83 2.48a2 2 0 0 0-1.66 0L3 6.38a1 1 0 0 0 0 1.83l8.18 3.71a2 2 0 0 0 1.66 0l8.18-3.7a1 1 0 0 0 0-1.83z"/><path d="M2.6 12.3 l8.58 4.02a2 2 0 0 0 1.65 0l8.58-4.02"/><path d="M2.6 16.9 l8.58 4.02a2 2 0 0 0 1.65 0l8.58-4.02"/></svg>
</div>
<div class="sep" style="top:287px"></div>
<div class="btn" id="b5"><svg width="24" height="24" viewBox="0 0 24 24" fill="none" stroke="#fff" stroke-width="1.5" stroke-linecap="butt"><circle cx="12" cy="12" r="6.6"/><path d="M2 12H5.4M18.6 12H22M12 2V5.4M12 18.6V22"/><circle cx="12" cy="12" r="1.3" fill="#fff" stroke="none"/></svg>
</div>
<div class="sep" style="top:353px"></div>
<div class="btn" id="b6"><svg width="24" height="24" viewBox="0 0 24 24" fill="none" stroke="#fff" stroke-width="1.5" stroke-linecap="round" stroke-linejoin="round"><path d="M9.671 4.136a2.34 2.34 0 0 1 4.659 0 2.34 2.34 0 0 0 3.319 1.915 2.34 2.34 0 0 1 2.33 4.033 2.34 2.34 0 0 0 0 3.831 2.34 2.34 0 0 1-2.33 4.033 2.34 2.34 0 0 0-3.319 1.915 2.34 2.34 0 0 1-4.659 0 2.34 2.34 0 0 0-3.32-1.915 2.34 2.34 0 0 1-2.33-4.033 2.34 2.34 0 0 0 0-3.831A2.34 2.34 0 0 1 6.35 6.051a2.34 2.34 0 0 0 3.319-1.915"/><circle cx="12" cy="12" r="3"/></svg>
</div>
</div>
<div id="topline"></div>
</div>
</body>
</html>
